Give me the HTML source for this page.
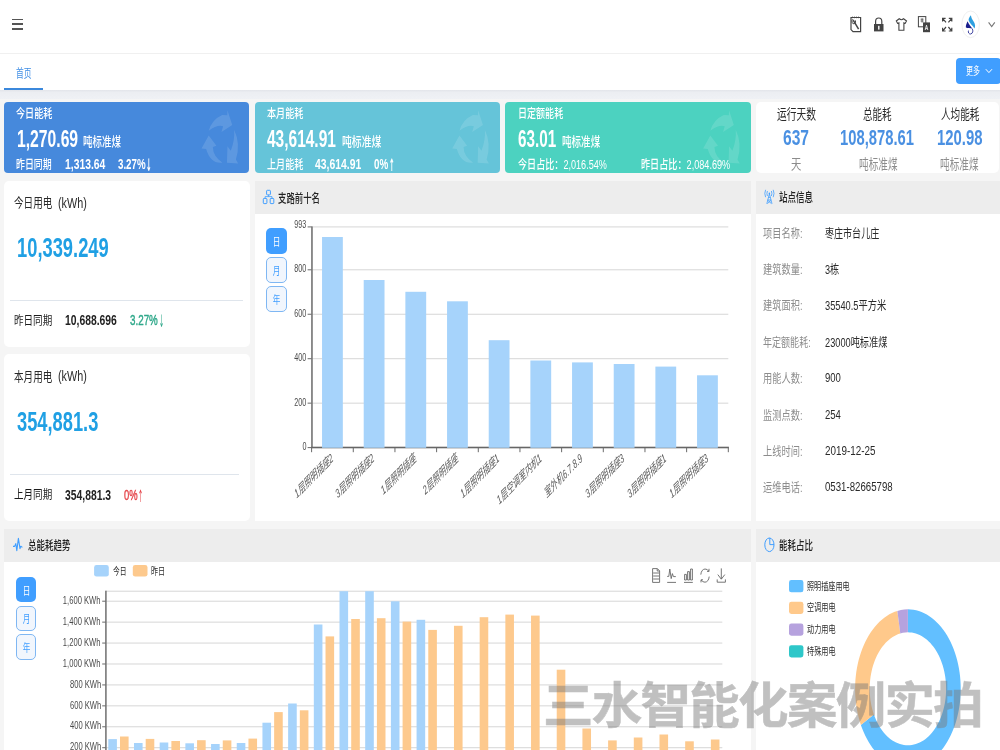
<!DOCTYPE html>
<html lang="zh-CN"><head><meta charset="utf-8"><title>首页</title>
<style>
html,body{margin:0;padding:0}
body{width:1000px;height:750px;overflow:hidden;position:relative;background:#f5f5f5;font-family:"Liberation Sans","Noto Sans CJK SC",sans-serif}
.t{position:absolute;white-space:nowrap;display:block}
svg{position:absolute;overflow:visible}
</style></head><body>
<div style="position:absolute;left:0.00px;top:0.00px;width:1000.00px;height:53.00px;background:#fff;border-radius:0;"></div>
<div style="position:absolute;left:0.00px;top:53.00px;width:1000.00px;height:1.00px;background:#f0f0f0;border-radius:0;"></div>
<div style="position:absolute;left:0.00px;top:54.00px;width:1000.00px;height:35.80px;background:#fff;border-radius:0;"></div>
<div style="position:absolute;left:0.00px;top:89.80px;width:1000.00px;height:9.00px;background:#eef0f4;border-radius:0;background:linear-gradient(#e3e5ea 0,#eceef2 2.5px,#eff1f5 100%);"></div>
<div style="position:absolute;left:11.50px;top:18.60px;width:11.50px;height:1.50px;background:#555;border-radius:0;"></div>
<div style="position:absolute;left:11.50px;top:23.30px;width:11.50px;height:1.50px;background:#555;border-radius:0;"></div>
<div style="position:absolute;left:11.50px;top:28.00px;width:11.50px;height:1.50px;background:#555;border-radius:0;"></div>
<div style="position:absolute;left:3.90px;top:87.50px;width:39.50px;height:2.20px;background:#3b88dc;border-radius:0;"></div>
<div style="position:absolute;left:956.20px;top:58.00px;width:44.40px;height:26.00px;background:#409eff;border-radius:4px;"></div>
<svg style="left:985px;top:68px" width="8" height="6" viewBox="0 0 8 6"><path d="M0.8 1.2 L3.9 4.6 L7 1.2" fill="none" stroke="#fff" stroke-width="1"/></svg>
<svg style="left:848px;top:10px" width="152" height="30" viewBox="848 10 152 30" fill="none" stroke="#444" stroke-width="1.2">
<!-- notebook + wrench -->
<path d="M851 17.5 H860.6 V31.6 H853 L851 29.6 Z"/>
<path d="M852.5 16.6v1.6 M854.5 16.6v1.6 M856.5 16.6v1.6 M858.5 16.6v1.6" stroke-width="0.8"/>
<path d="M853.2 20.2 L858.6 29.2" stroke-width="1.5"/>
<path d="M853 19.2 a1.8 2.4 0 1 0 2.4 1.2" stroke-width="1"/>
<!-- lock -->
<path d="M875.6 24 V21.4 a3.1 3.4 0 0 1 6.2 0 V24" stroke-width="1.2"/>
<rect x="874" y="24" width="9.5" height="7.4" fill="#444" stroke="none"/>
<rect x="878.1" y="25.8" width="1.4" height="3.8" fill="#fff" stroke="none"/>
<!-- shirt -->
<path d="M899.2 18.8 L896.3 21 L897.6 23.4 L898.9 22.8 V30.2 H903.9 V22.8 L905.2 23.4 L906.5 21 L903.6 18.8 Q901.4 20.6 899.2 18.8 Z" stroke-width="1.1"/>
<!-- translate -->
<rect x="918.4" y="16.6" width="7.4" height="10.2" stroke-width="1"/>
<path d="M920.6 19.2h3 M920.6 21h3 M922.1 18.4v4.2" stroke-width="0.8"/>
<rect x="923" y="22.4" width="7" height="9.8" fill="#444" stroke="none"/>
<path d="M925.2 30 L926.5 25.2 L927.8 30 M925.7 28.4h1.7" stroke="#fff" stroke-width="0.8"/>
<!-- fullscreen -->
<path d="M942.6 21.6 V18.4 H945.6 M942.8 18.6 L946 22.4" stroke-width="1.2"/>
<path d="M951.8 21.6 V18.4 H948.8 M951.6 18.6 L948.4 22.4" stroke-width="1.2"/>
<path d="M942.6 27.8 V31 H945.6 M942.8 30.8 L946 27" stroke-width="1.2"/>
<path d="M951.8 27.8 V31 H948.8 M951.6 30.8 L948.4 27" stroke-width="1.2"/>
<!-- avatar -->
<ellipse cx="970.65" cy="24.3" rx="8.8" ry="13.3" fill="#fff" stroke="#f0f0f0" stroke-width="1"/>
<path d="M970.9 15.2 C969.5 17 968.2 18.8 968.7 20.6 C969.6 23.6 972.8 25.4 974.4 28.6 C975.6 26.4 975.2 23.8 973.6 21.4 C972.4 19.6 971.2 17.8 970.9 15.2 Z" fill="#2e9fe0" stroke="none"/>
<path d="M967.5 21.2 C966.6 23.4 965.6 25.6 965.9 27.6 C967.6 28.8 970 28.2 972.3 28.6 C971 26.2 968.6 24.2 967.5 21.2 Z" fill="#1a1f8c" stroke="none"/>
<path d="M972.2 28.6 C973.4 30.4 972.9 33.6 970.7 34 C968.9 34.2 967.9 32.4 968.5 30.6" stroke="#2a2f95" stroke-width="0.9"/>
<!-- chevron -->
<path d="M988.6 22.3 L991.7 26.5 L994.8 22.3" stroke="#777" stroke-width="1.1"/>
</svg>
<div style="position:absolute;left:4.00px;top:102.00px;width:244.80px;height:71.40px;background:#4689dc;border-radius:4px;"></div>
<div style="position:absolute;left:254.70px;top:102.00px;width:244.90px;height:71.40px;background:#65c4d9;border-radius:4px;"></div>
<div style="position:absolute;left:505.40px;top:102.00px;width:245.60px;height:71.40px;background:#4cd2c0;border-radius:4px;"></div>
<svg style="left:0;top:0" width="1000" height="200" viewBox="0 0 1000 200"><path d="M208.72 130.80 Q211.60 119.76 222.16 114.96 L227.25 115.25 L227.44 110.16 L232.24 125.04 L221.49 131.95 L223.12 126.19 Q217.36 124.27 208.72 130.80Z M234.16 129.84 Q240.88 144.24 235.89 159.41 L238.19 163.44 L226.96 162.67 L227.44 146.16 L230.80 150.77 Q234.93 140.40 234.16 129.84Z M208.72 135.60 L216.40 145.68 L212.85 147.12 Q213.04 156.72 222.45 162.67 Q210.64 164.40 206.13 149.04 L201.52 148.56Z" fill="#fff" fill-opacity="0.13"/><path d="M459.42 130.80 Q462.30 119.76 472.86 114.96 L477.95 115.25 L478.14 110.16 L482.94 125.04 L472.19 131.95 L473.82 126.19 Q468.06 124.27 459.42 130.80Z M484.86 129.84 Q491.58 144.24 486.59 159.41 L488.89 163.44 L477.66 162.67 L478.14 146.16 L481.50 150.77 Q485.63 140.40 484.86 129.84Z M459.42 135.60 L467.10 145.68 L463.55 147.12 Q463.74 156.72 473.15 162.67 Q461.34 164.40 456.83 149.04 L452.22 148.56Z" fill="#fff" fill-opacity="0.13"/><path d="M710.32 130.80 Q713.20 119.76 723.76 114.96 L728.85 115.25 L729.04 110.16 L733.84 125.04 L723.09 131.95 L724.72 126.19 Q718.96 124.27 710.32 130.80Z M735.76 129.84 Q742.48 144.24 737.49 159.41 L739.79 163.44 L728.56 162.67 L729.04 146.16 L732.40 150.77 Q736.53 140.40 735.76 129.84Z M710.32 135.60 L718.00 145.68 L714.45 147.12 Q714.64 156.72 724.05 162.67 Q712.24 164.40 707.73 149.04 L703.12 148.56Z" fill="#fff" fill-opacity="0.13"/></svg>
<div style="position:absolute;left:756.00px;top:102.00px;width:242.50px;height:71.40px;background:#fff;border-radius:5px;"></div>
<div style="position:absolute;left:4.00px;top:180.70px;width:245.50px;height:165.90px;background:#fff;border-radius:5px;"></div>
<div style="position:absolute;left:4.00px;top:354.00px;width:245.50px;height:166.50px;background:#fff;border-radius:5px;"></div>
<div style="position:absolute;left:10.40px;top:299.60px;width:232.60px;height:1.00px;background:#dfe5ec;border-radius:0;"></div>
<div style="position:absolute;left:10.40px;top:473.80px;width:228.30px;height:1.00px;background:#dfe5ec;border-radius:0;"></div>
<div style="position:absolute;left:254.70px;top:180.70px;width:496.30px;height:340.30px;background:#fff;border-radius:0;"></div>
<div style="position:absolute;left:254.70px;top:180.70px;width:496.30px;height:33.00px;background:#ededed;border-radius:0;"></div>
<div style="position:absolute;left:756.00px;top:180.70px;width:250.00px;height:340.30px;background:#fff;border-radius:0;"></div>
<div style="position:absolute;left:756.00px;top:180.70px;width:250.00px;height:33.00px;background:#ededed;border-radius:0;"></div>
<div style="position:absolute;left:3.70px;top:528.60px;width:747.00px;height:231.40px;background:#fff;border-radius:0;"></div>
<div style="position:absolute;left:3.70px;top:528.60px;width:747.00px;height:33.00px;background:#ededed;border-radius:0;"></div>
<div style="position:absolute;left:756.00px;top:528.60px;width:250.00px;height:231.40px;background:#fff;border-radius:0;"></div>
<div style="position:absolute;left:756.00px;top:528.60px;width:250.00px;height:33.00px;background:#ededed;border-radius:0;"></div>
<svg style="left:0;top:0" width="1000" height="750" viewBox="0 0 1000 750" fill="none" stroke="#409eff" stroke-width="1">
<!-- org -->
<rect x="266.6" y="190.3" width="3.8" height="4.6" rx="0.8"/>
<rect x="263.3" y="198.4" width="3.6" height="5.2" rx="0.8"/>
<rect x="270.2" y="198.4" width="3.6" height="5.2" rx="0.8"/>
<path d="M268.5 194.9 V196.6 M265.1 198.4 V196.6 H272 V198.4" stroke-width="0.8"/>
<!-- tower -->
<path d="M769.4 193.8 L766.8 203.8 M769.4 193.8 L772 203.8 M767.8 200 H771 M768.4 197.4 H770.4 M767.6 200.2 L771.4 203.6 M771.2 200.2 L767.4 203.6" stroke-width="0.8"/>
<circle cx="769.4" cy="193.4" r="0.8" fill="#409eff" stroke="none"/>
<path d="M767.4 191 Q766.4 193.4 767.4 196 M771.4 191 Q772.4 193.4 771.4 196 M765.6 189.8 Q764 193.4 765.6 197.2 M773.2 189.8 Q774.8 193.4 773.2 197.2" stroke-width="0.8"/>
<!-- pulse -->
<path d="M13 546.4 H14.6 L15.8 543.6 L16.8 550.6 L18.4 538.4 L20 548.6 L20.8 546.2 L22.4 547.4" stroke-width="1.1" stroke-linejoin="round"/>
<!-- pie -->
<ellipse cx="769.4" cy="544.8" rx="4.6" ry="6.8"/>
<path d="M769.8 538 V544.6 H774" />
</svg>
<div style="position:absolute;left:266.45px;top:228.40px;width:20.40px;height:25.60px;background:#409eff;border-radius:5px;"></div>
<div style="position:absolute;left:266.45px;top:257.40px;width:20.40px;height:25.60px;background:#f1f6fd;border-radius:5px;box-sizing:border-box;border:1.3px solid #7fb7f3;"></div>
<div style="position:absolute;left:266.45px;top:286.40px;width:20.40px;height:25.60px;background:#f1f6fd;border-radius:5px;box-sizing:border-box;border:1.3px solid #7fb7f3;"></div>
<div style="position:absolute;left:15.75px;top:576.70px;width:20.60px;height:25.20px;background:#409eff;border-radius:5px;"></div>
<div style="position:absolute;left:15.75px;top:605.60px;width:20.60px;height:25.20px;background:#f1f6fd;border-radius:5px;box-sizing:border-box;border:1.3px solid #7fb7f3;"></div>
<div style="position:absolute;left:15.75px;top:634.40px;width:20.60px;height:25.20px;background:#f1f6fd;border-radius:5px;box-sizing:border-box;border:1.3px solid #7fb7f3;"></div>
<svg style="left:0;top:0" width="1000" height="750" viewBox="0 0 1000 750"><rect x="311.6" y="226.41" width="416.70" height="1" fill="#d6d6d6"/><rect x="311.6" y="269.30" width="416.70" height="1" fill="#d6d6d6"/><rect x="311.6" y="313.75" width="416.70" height="1" fill="#d6d6d6"/><rect x="311.6" y="358.20" width="416.70" height="1" fill="#d6d6d6"/><rect x="311.6" y="402.65" width="416.70" height="1" fill="#d6d6d6"/><rect x="311.1" y="226.41" width="1.7" height="221.69" fill="#7c7c7c"/><rect x="311.0" y="446.70" width="417.90" height="1.6" fill="#666"/><rect x="307.6" y="226.41" width="4" height="1" fill="#6a6a6a"/><rect x="307.6" y="269.30" width="4" height="1" fill="#6a6a6a"/><rect x="307.6" y="313.75" width="4" height="1" fill="#6a6a6a"/><rect x="307.6" y="358.20" width="4" height="1" fill="#6a6a6a"/><rect x="307.6" y="402.65" width="4" height="1" fill="#6a6a6a"/><rect x="307.6" y="447.10" width="4" height="1" fill="#6a6a6a"/><rect x="311.10" y="447.60" width="1" height="4.6" fill="#6a6a6a"/><rect x="352.77" y="447.60" width="1" height="4.6" fill="#6a6a6a"/><rect x="394.44" y="447.60" width="1" height="4.6" fill="#6a6a6a"/><rect x="436.11" y="447.60" width="1" height="4.6" fill="#6a6a6a"/><rect x="477.78" y="447.60" width="1" height="4.6" fill="#6a6a6a"/><rect x="519.45" y="447.60" width="1" height="4.6" fill="#6a6a6a"/><rect x="561.12" y="447.60" width="1" height="4.6" fill="#6a6a6a"/><rect x="602.79" y="447.60" width="1" height="4.6" fill="#6a6a6a"/><rect x="644.46" y="447.60" width="1" height="4.6" fill="#6a6a6a"/><rect x="686.13" y="447.60" width="1" height="4.6" fill="#6a6a6a"/><rect x="727.80" y="447.60" width="1" height="4.6" fill="#6a6a6a"/><rect x="322.04" y="237.00" width="20.8" height="210.80" fill="#a6d3fb"/><rect x="363.71" y="280.00" width="20.8" height="167.80" fill="#a6d3fb"/><rect x="405.38" y="291.80" width="20.8" height="156.00" fill="#a6d3fb"/><rect x="447.05" y="301.30" width="20.8" height="146.50" fill="#a6d3fb"/><rect x="488.72" y="340.20" width="20.8" height="107.60" fill="#a6d3fb"/><rect x="530.38" y="360.50" width="20.8" height="87.30" fill="#a6d3fb"/><rect x="572.05" y="362.40" width="20.8" height="85.40" fill="#a6d3fb"/><rect x="613.73" y="364.00" width="20.8" height="83.80" fill="#a6d3fb"/><rect x="655.39" y="366.60" width="20.8" height="81.20" fill="#a6d3fb"/><rect x="697.06" y="375.30" width="20.8" height="72.50" fill="#a6d3fb"/></svg>
<svg style="left:0;top:0" width="1000" height="750" viewBox="0 0 1000 750"><rect x="105.8" y="590.7" width="616.50" height="1" fill="#d6d6d6"/><rect x="105.8" y="747.21" width="616.50" height="1" fill="#d6d6d6"/><rect x="105.8" y="726.28" width="616.50" height="1" fill="#d6d6d6"/><rect x="105.8" y="705.35" width="616.50" height="1" fill="#d6d6d6"/><rect x="105.8" y="684.42" width="616.50" height="1" fill="#d6d6d6"/><rect x="105.8" y="663.49" width="616.50" height="1" fill="#d6d6d6"/><rect x="105.8" y="642.56" width="616.50" height="1" fill="#d6d6d6"/><rect x="105.8" y="621.63" width="616.50" height="1" fill="#d6d6d6"/><rect x="105.8" y="600.70" width="616.50" height="1" fill="#d6d6d6"/><rect x="108.30" y="739.10" width="8.6" height="20.90" fill="#a6d3fb"/><rect x="133.99" y="743.00" width="8.6" height="17.00" fill="#a6d3fb"/><rect x="159.68" y="742.50" width="8.6" height="17.50" fill="#a6d3fb"/><rect x="185.37" y="743.30" width="8.6" height="16.70" fill="#a6d3fb"/><rect x="211.06" y="744.00" width="8.6" height="16.00" fill="#a6d3fb"/><rect x="236.75" y="743.00" width="8.6" height="17.00" fill="#a6d3fb"/><rect x="262.44" y="722.70" width="8.6" height="37.30" fill="#a6d3fb"/><rect x="288.13" y="703.50" width="8.6" height="56.50" fill="#a6d3fb"/><rect x="313.82" y="624.50" width="8.6" height="135.50" fill="#a6d3fb"/><rect x="339.51" y="591.20" width="8.6" height="168.80" fill="#a6d3fb"/><rect x="365.20" y="591.20" width="8.6" height="168.80" fill="#a6d3fb"/><rect x="390.89" y="601.30" width="8.6" height="158.70" fill="#a6d3fb"/><rect x="416.58" y="619.80" width="8.6" height="140.20" fill="#a6d3fb"/><rect x="120.00" y="736.50" width="8.6" height="23.50" fill="#fdc98d"/><rect x="145.69" y="738.90" width="8.6" height="21.10" fill="#fdc98d"/><rect x="171.38" y="741.00" width="8.6" height="19.00" fill="#fdc98d"/><rect x="197.07" y="740.20" width="8.6" height="19.80" fill="#fdc98d"/><rect x="222.76" y="740.40" width="8.6" height="19.60" fill="#fdc98d"/><rect x="248.45" y="738.60" width="8.6" height="21.40" fill="#fdc98d"/><rect x="274.14" y="712.10" width="8.6" height="47.90" fill="#fdc98d"/><rect x="299.83" y="710.30" width="8.6" height="49.70" fill="#fdc98d"/><rect x="325.52" y="636.40" width="8.6" height="123.60" fill="#fdc98d"/><rect x="351.21" y="619.00" width="8.6" height="141.00" fill="#fdc98d"/><rect x="376.90" y="618.20" width="8.6" height="141.80" fill="#fdc98d"/><rect x="402.59" y="621.60" width="8.6" height="138.40" fill="#fdc98d"/><rect x="428.28" y="629.90" width="8.6" height="130.10" fill="#fdc98d"/><rect x="453.97" y="625.80" width="8.6" height="134.20" fill="#fdc98d"/><rect x="479.66" y="617.20" width="8.6" height="142.80" fill="#fdc98d"/><rect x="505.35" y="614.60" width="8.6" height="145.40" fill="#fdc98d"/><rect x="531.04" y="615.60" width="8.6" height="144.40" fill="#fdc98d"/><rect x="556.73" y="669.70" width="8.6" height="90.30" fill="#fdc98d"/><rect x="582.42" y="728.50" width="8.6" height="31.50" fill="#fdc98d"/><rect x="608.11" y="740.40" width="8.6" height="19.60" fill="#fdc98d"/><rect x="633.80" y="737.50" width="8.6" height="22.50" fill="#fdc98d"/><rect x="659.49" y="734.50" width="8.6" height="25.50" fill="#fdc98d"/><rect x="685.18" y="741.30" width="8.6" height="18.70" fill="#fdc98d"/><rect x="710.87" y="739.50" width="8.6" height="20.50" fill="#fdc98d"/><rect x="105.1" y="590.7" width="1.6" height="170" fill="#787878"/><rect x="102.2" y="747.21" width="3.6" height="1" fill="#6a6a6a"/><rect x="102.2" y="726.28" width="3.6" height="1" fill="#6a6a6a"/><rect x="102.2" y="705.35" width="3.6" height="1" fill="#6a6a6a"/><rect x="102.2" y="684.42" width="3.6" height="1" fill="#6a6a6a"/><rect x="102.2" y="663.49" width="3.6" height="1" fill="#6a6a6a"/><rect x="102.2" y="642.56" width="3.6" height="1" fill="#6a6a6a"/><rect x="102.2" y="621.63" width="3.6" height="1" fill="#6a6a6a"/><rect x="102.2" y="600.70" width="3.6" height="1" fill="#6a6a6a"/><rect x="94.1" y="565" width="14.7" height="11.6" rx="2.4" fill="#a6d3fb"/><rect x="132.8" y="565" width="14.7" height="11.6" rx="2.4" fill="#fdc98d"/><g fill="none" stroke="#666" stroke-width="0.9">
<path d="M652.6 568.6 H657.4 L659.6 570.8 V582.4 H652.6 Z M653.2 573 H659 M653.2 576 H659 M653.2 579 H659 M657.2 568.8 V571 H659.4"/>
<path d="M667.2 576.4 H668.8 L669.8 569 L671.2 578.6 L672.4 573.6 L673.4 576.6 H675.8 M667.2 582.4 H676"/>
<path d="M684.6 580 V574.4 H686.4 V580 Z M687.6 580 V571.6 H689.4 V580 Z M690.6 580 V569 H692.4 V580 Z M684 582.4 H692.8"/>
<path d="M700.8 574.6 Q701.4 569.4 705 569 Q707.6 569 708.8 571.2 M709 568.8 V571.4 H707 M709.2 576.6 Q708.6 581.8 705 582.2 Q702.4 582.2 701.2 580 M701 582.4 V579.8 H703"/>
<path d="M721.3 568.4 V579 M717.8 574.6 L721.3 579.2 L724.8 574.6 M717.2 579.4 V582.2 H725.4 V579.4"/>
</g></svg>
<svg style="left:0;top:0" width="1000" height="750" viewBox="0 0 1000 750"><path d="M907.90 609.30 L910.66 609.41 L913.42 609.74 L916.16 610.28 L918.88 611.04 L921.57 612.01 L924.22 613.19 L926.82 614.58 L929.38 616.17 L931.87 617.96 L934.30 619.95 L936.66 622.13 L938.94 624.48 L941.13 627.02 L943.23 629.72 L945.24 632.59 L947.14 635.60 L948.93 638.77 L950.62 642.07 L952.18 645.50 L953.63 649.05 L954.95 652.71 L956.14 656.46 L957.19 660.31 L958.12 664.23 L958.90 668.22 L959.55 672.27 L960.05 676.36 L960.41 680.49 L960.63 684.64 L960.70 688.80 L960.63 692.96 L960.41 697.11 L960.05 701.24 L959.55 705.33 L958.90 709.38 L958.12 713.37 L957.19 717.29 L956.14 721.14 L954.95 724.89 L953.63 728.55 L952.18 732.10 L950.62 735.53 L948.93 738.83 L947.14 742.00 L945.24 745.01 L943.23 747.88 L941.13 750.58 L938.94 753.12 L936.66 755.47 L934.30 757.65 L931.87 759.64 L929.38 761.43 L926.82 763.02 L924.22 764.41 L921.57 765.59 L918.88 766.56 L916.16 767.32 L913.42 767.86 L910.66 768.19 L907.90 768.30 L905.14 768.19 L902.38 767.86 L899.64 767.32 L896.92 766.56 L894.23 765.59 L891.58 764.41 L888.98 763.02 L886.42 761.43 L883.93 759.64 L881.50 757.65 L879.14 755.47 L876.86 753.12 L874.67 750.58 L872.57 747.88 L870.56 745.01 L868.66 742.00 L866.87 738.83 L865.18 735.53 L863.62 732.10 L862.17 728.55 L860.85 724.89 L873.86 714.45 L874.82 717.05 L875.86 719.57 L877.00 722.01 L878.21 724.36 L879.51 726.61 L880.89 728.75 L882.34 730.79 L883.86 732.71 L885.45 734.51 L887.09 736.18 L888.80 737.73 L890.56 739.14 L892.36 740.42 L894.21 741.55 L896.10 742.53 L898.01 743.37 L899.96 744.07 L901.92 744.60 L903.91 744.99 L905.90 745.22 L907.90 745.30 L909.90 745.22 L911.89 744.99 L913.88 744.60 L915.84 744.07 L917.79 743.37 L919.70 742.53 L921.59 741.55 L923.44 740.42 L925.24 739.14 L927.00 737.73 L928.71 736.18 L930.35 734.51 L931.94 732.71 L933.46 730.79 L934.91 728.75 L936.29 726.61 L937.59 724.36 L938.80 722.01 L939.94 719.57 L940.98 717.05 L941.94 714.45 L942.80 711.78 L943.56 709.05 L944.23 706.26 L944.80 703.42 L945.27 700.55 L945.63 697.64 L945.89 694.71 L946.05 691.76 L946.10 688.80 L946.05 685.84 L945.89 682.89 L945.63 679.96 L945.27 677.05 L944.80 674.18 L944.23 671.34 L943.56 668.55 L942.80 665.82 L941.94 663.15 L940.98 660.55 L939.94 658.03 L938.80 655.59 L937.59 653.24 L936.29 650.99 L934.91 648.85 L933.46 646.81 L931.94 644.89 L930.35 643.09 L928.71 641.42 L927.00 639.87 L925.24 638.46 L923.44 637.18 L921.59 636.05 L919.70 635.07 L917.79 634.23 L915.84 633.53 L913.88 633.00 L911.89 632.61 L909.90 632.38 L907.90 632.30Z" fill="#62bfff"/><path d="M860.85 724.89 L859.66 721.12 L858.60 717.25 L857.67 713.31 L856.89 709.30 L856.24 705.23 L855.74 701.12 L855.38 696.97 L855.17 692.80 L855.10 688.62 L855.18 684.44 L855.40 680.27 L855.78 676.13 L856.29 672.02 L856.95 667.96 L857.75 663.95 L858.68 660.01 L859.76 656.16 L860.96 652.39 L862.30 648.72 L863.76 645.17 L865.35 641.73 L867.05 638.43 L868.87 635.27 L870.79 632.25 L872.82 629.39 L874.94 626.69 L877.15 624.17 L879.45 621.83 L881.83 619.67 L884.28 617.70 L886.80 615.93 L889.37 614.36 L892.00 612.99 L894.67 611.84 L897.37 610.90 L900.28 633.43 L898.33 634.10 L896.39 634.92 L894.50 635.89 L892.63 637.01 L890.81 638.27 L889.04 639.67 L887.32 641.20 L885.66 642.87 L884.05 644.66 L882.52 646.58 L881.05 648.61 L879.66 650.75 L878.35 653.00 L877.11 655.35 L875.97 657.79 L874.91 660.32 L873.94 662.92 L873.07 665.60 L872.29 668.34 L871.61 671.14 L871.04 673.99 L870.56 676.87 L870.19 679.79 L869.92 682.74 L869.76 685.70 L869.70 688.67 L869.75 691.64 L869.90 694.61 L870.16 697.56 L870.52 700.48 L870.99 703.37 L871.56 706.22 L872.23 709.02 L873.00 711.77 L873.86 714.45Z" fill="#ffc98b"/><path d="M897.37 610.90 L900.86 610.01 L904.37 609.48 L907.90 609.30 L907.90 632.30 L905.35 632.43 L902.80 632.81 L900.28 633.43Z" fill="#b6a2de"/><rect x="789" y="580.10" width="14.4" height="12.2" rx="2.4" fill="#62bfff"/><rect x="789" y="601.80" width="14.4" height="12.2" rx="2.4" fill="#ffc98b"/><rect x="789" y="623.50" width="14.4" height="12.2" rx="2.4" fill="#b6a2de"/><rect x="789" y="645.20" width="14.4" height="12.2" rx="2.4" fill="#2ec7c9"/></svg>
<div style="position:absolute;left:0;top:0;width:1000px;height:750px;will-change:transform">
<span class="t" style="left:16.30px;top:67.52px;font-size:12px;line-height:12px;height:12px;color:#3f8ee6;font-weight:400;transform-origin:0 50%;transform:scaleX(0.6454);">首页</span>
<span class="t" style="left:965.90px;top:66.03px;font-size:11px;line-height:11px;height:11px;color:#fff;font-weight:400;transform-origin:0 50%;transform:scaleX(0.6364);">更多</span>
<span class="t" style="left:16.30px;top:108.21px;font-size:12.5px;line-height:12.5px;height:12.5px;color:#fff;font-weight:500;transform-origin:0 50%;transform:scaleX(0.7278);">今日能耗</span>
<span class="t" style="left:16.90px;top:126.90px;font-size:24px;line-height:24px;height:24px;color:#fff;font-weight:700;transform-origin:0 50%;transform:scaleX(0.6540);">1,270.69</span>
<span class="t" style="left:83.00px;top:134.70px;font-size:13px;line-height:13px;height:13px;color:#fff;font-weight:500;transform-origin:0 50%;transform:scaleX(0.7305);">吨标准煤</span>
<span class="t" style="left:16.30px;top:159.01px;font-size:12.5px;line-height:12.5px;height:12.5px;color:#fff;font-weight:500;transform-origin:0 50%;transform:scaleX(0.7138);">昨日同期</span>
<span class="t" style="left:65.00px;top:156.25px;font-size:15.5px;line-height:15.5px;height:15.5px;color:#fff;font-weight:700;transform-origin:0 50%;transform:scaleX(0.6678);">1,313.64</span>
<span class="t" style="left:118.30px;top:156.25px;font-size:15.5px;line-height:15.5px;height:15.5px;color:#fff;font-weight:700;transform-origin:0 50%;transform:scaleX(0.6279);">3.27%</span>
<span class="t" style="font-family:'DejaVu Sans',sans-serif;left:146.40px;top:156.80px;font-size:17px;line-height:17px;height:17px;color:#fff;font-weight:700;transform-origin:0 50%;transform:scaleX(0.3930);">↓</span>
<span class="t" style="left:266.90px;top:108.21px;font-size:12.5px;line-height:12.5px;height:12.5px;color:#fff;font-weight:500;transform-origin:0 50%;transform:scaleX(0.7278);">本月能耗</span>
<span class="t" style="left:266.90px;top:126.90px;font-size:24px;line-height:24px;height:24px;color:#fff;font-weight:700;transform-origin:0 50%;transform:scaleX(0.6452);">43,614.91</span>
<span class="t" style="left:341.50px;top:134.70px;font-size:13px;line-height:13px;height:13px;color:#fff;font-weight:500;transform-origin:0 50%;transform:scaleX(0.7555);">吨标准煤</span>
<span class="t" style="left:266.90px;top:159.01px;font-size:12.5px;line-height:12.5px;height:12.5px;color:#fff;font-weight:500;transform-origin:0 50%;transform:scaleX(0.7278);">上月能耗</span>
<span class="t" style="left:315.00px;top:156.25px;font-size:15.5px;line-height:15.5px;height:15.5px;color:#fff;font-weight:700;transform-origin:0 50%;transform:scaleX(0.6713);">43,614.91</span>
<span class="t" style="left:374.30px;top:156.25px;font-size:15.5px;line-height:15.5px;height:15.5px;color:#fff;font-weight:700;transform-origin:0 50%;transform:scaleX(0.6338);">0%</span>
<span class="t" style="font-family:'DejaVu Sans',sans-serif;left:388.80px;top:156.80px;font-size:17px;line-height:17px;height:17px;color:#fff;font-weight:700;transform-origin:0 50%;transform:scaleX(0.3930);">↑</span>
<span class="t" style="left:517.90px;top:108.21px;font-size:12.5px;line-height:12.5px;height:12.5px;color:#fff;font-weight:500;transform-origin:0 50%;transform:scaleX(0.7230);">日定额能耗</span>
<span class="t" style="left:517.90px;top:126.90px;font-size:24px;line-height:24px;height:24px;color:#fff;font-weight:700;transform-origin:0 50%;transform:scaleX(0.6360);">63.01</span>
<span class="t" style="left:562.10px;top:134.70px;font-size:13px;line-height:13px;height:13px;color:#fff;font-weight:500;transform-origin:0 50%;transform:scaleX(0.7344);">吨标准煤</span>
<span class="t" style="left:517.90px;top:159.01px;font-size:12.5px;line-height:12.5px;height:12.5px;color:#fff;font-weight:500;transform-origin:0 50%;transform:scaleX(0.7270);">今日占比：2,016.54%</span>
<span class="t" style="left:640.60px;top:159.01px;font-size:12.5px;line-height:12.5px;height:12.5px;color:#fff;font-weight:500;transform-origin:0 50%;transform:scaleX(0.7295);">昨日占比：2,084.69%</span>
<span class="t" style="left:777.00px;top:107.77px;font-size:13.8px;line-height:13.8px;height:13.8px;color:#2a2a2a;font-weight:400;transform-origin:0 50%;transform:scaleX(0.7067);">运行天数</span>
<span class="t" style="left:863.40px;top:107.77px;font-size:13.8px;line-height:13.8px;height:13.8px;color:#2a2a2a;font-weight:400;transform-origin:0 50%;transform:scaleX(0.6910);">总能耗</span>
<span class="t" style="left:940.60px;top:107.77px;font-size:13.8px;line-height:13.8px;height:13.8px;color:#2a2a2a;font-weight:400;transform-origin:0 50%;transform:scaleX(0.6976);">人均能耗</span>
<span class="t" style="left:782.90px;top:126.60px;font-size:22px;line-height:22px;height:22px;color:#4a90e2;font-weight:700;transform-origin:0 50%;transform:scaleX(0.7081);">637</span>
<span class="t" style="left:840.00px;top:126.60px;font-size:22px;line-height:22px;height:22px;color:#4a90e2;font-weight:700;transform-origin:0 50%;transform:scaleX(0.6721);">108,878.61</span>
<span class="t" style="left:936.80px;top:126.60px;font-size:22px;line-height:22px;height:22px;color:#4a90e2;font-weight:700;transform-origin:0 50%;transform:scaleX(0.6761);">120.98</span>
<span class="t" style="left:790.70px;top:157.90px;font-size:13.5px;line-height:13.5px;height:13.5px;color:#8c8c8c;font-weight:400;transform-origin:0 50%;transform:scaleX(0.7630);">天</span>
<span class="t" style="left:858.80px;top:157.90px;font-size:13.5px;line-height:13.5px;height:13.5px;color:#8c8c8c;font-weight:400;transform-origin:0 50%;transform:scaleX(0.7130);">吨标准煤</span>
<span class="t" style="left:940.20px;top:157.90px;font-size:13.5px;line-height:13.5px;height:13.5px;color:#8c8c8c;font-weight:400;transform-origin:0 50%;transform:scaleX(0.7130);">吨标准煤</span>
<span class="t" style="left:13.90px;top:196.20px;font-size:13px;line-height:13px;height:13px;color:#2a2a2a;font-weight:400;transform-origin:0 50%;transform:scaleX(0.7363);">今日用电</span>
<span class="t" style="left:58.30px;top:195.75px;font-size:14.5px;line-height:14.5px;height:14.5px;color:#2a2a2a;font-weight:400;transform-origin:0 50%;transform:scaleX(0.7447);">(kWh)</span>
<span class="t" style="left:17.00px;top:235.00px;font-size:27px;line-height:27px;height:27px;color:#20a0e4;font-weight:700;transform-origin:0 50%;transform:scaleX(0.6786);">10,339.249</span>
<span class="t" style="left:14.00px;top:314.90px;font-size:12.3px;line-height:12.3px;height:12.3px;color:#1c1c1c;font-weight:400;transform-origin:0 50%;transform:scaleX(0.7764);">昨日同期</span>
<span class="t" style="left:65.20px;top:312.35px;font-size:15.5px;line-height:15.5px;height:15.5px;color:#222;font-weight:700;transform-origin:0 50%;transform:scaleX(0.6677);">10,688.696</span>
<span class="t" style="left:130.00px;top:312.35px;font-size:15.5px;line-height:15.5px;height:15.5px;color:#2fa88a;font-weight:400;transform-origin:0 50%;transform:scaleX(0.6325);-webkit-text-stroke:0.45px #2fa88a;">3.27%</span>
<span class="t" style="font-family:'DejaVu Sans',sans-serif;left:158.60px;top:313.00px;font-size:17px;line-height:17px;height:17px;color:#2fa88a;font-weight:400;transform-origin:0 50%;transform:scaleX(0.3509);">↓</span>
<span class="t" style="left:13.90px;top:369.61px;font-size:13px;line-height:13px;height:13px;color:#2a2a2a;font-weight:400;transform-origin:0 50%;transform:scaleX(0.7363);">本月用电</span>
<span class="t" style="left:58.30px;top:369.25px;font-size:14.5px;line-height:14.5px;height:14.5px;color:#2a2a2a;font-weight:400;transform-origin:0 50%;transform:scaleX(0.7447);">(kWh)</span>
<span class="t" style="left:17.00px;top:408.80px;font-size:27px;line-height:27px;height:27px;color:#20a0e4;font-weight:700;transform-origin:0 50%;transform:scaleX(0.6768);">354,881.3</span>
<span class="t" style="left:14.00px;top:489.40px;font-size:12.3px;line-height:12.3px;height:12.3px;color:#1c1c1c;font-weight:400;transform-origin:0 50%;transform:scaleX(0.7764);">上月同期</span>
<span class="t" style="left:65.20px;top:486.85px;font-size:15.5px;line-height:15.5px;height:15.5px;color:#222;font-weight:700;transform-origin:0 50%;transform:scaleX(0.6684);">354,881.3</span>
<span class="t" style="left:124.00px;top:486.85px;font-size:15.5px;line-height:15.5px;height:15.5px;color:#e5484d;font-weight:400;transform-origin:0 50%;transform:scaleX(0.6070);-webkit-text-stroke:0.45px #e5484d;">0%</span>
<span class="t" style="font-family:'DejaVu Sans',sans-serif;left:138.20px;top:487.50px;font-size:17px;line-height:17px;height:17px;color:#e5484d;font-weight:400;transform-origin:0 50%;transform:scaleX(0.3509);">↑</span>
<span class="t" style="left:277.80px;top:192.61px;font-size:12.5px;line-height:12.5px;height:12.5px;color:#222;font-weight:500;transform-origin:0 50%;transform:scaleX(0.6718);">支路前十名</span>
<span class="t" style="left:779.20px;top:192.41px;font-size:12.5px;line-height:12.5px;height:12.5px;color:#222;font-weight:500;transform-origin:0 50%;transform:scaleX(0.6798);">站点信息</span>
<span class="t" style="left:27.60px;top:540.41px;font-size:12.5px;line-height:12.5px;height:12.5px;color:#222;font-weight:500;transform-origin:0 50%;transform:scaleX(0.6782);">总能耗趋势</span>
<span class="t" style="left:779.20px;top:540.41px;font-size:12.5px;line-height:12.5px;height:12.5px;color:#222;font-weight:500;transform-origin:0 50%;transform:scaleX(0.6798);">能耗占比</span>
<span class="t" style="left:271.15px;top:237.44px;font-size:11px;line-height:11px;height:11px;color:#fff;font-weight:400;transform-origin:50% 50%;transform:scaleX(0.6909);">日</span>
<span class="t" style="left:271.15px;top:266.44px;font-size:11px;line-height:11px;height:11px;color:#409eff;font-weight:400;transform-origin:50% 50%;transform:scaleX(0.6909);">月</span>
<span class="t" style="left:271.15px;top:295.44px;font-size:11px;line-height:11px;height:11px;color:#409eff;font-weight:400;transform-origin:50% 50%;transform:scaleX(0.6909);">年</span>
<span class="t" style="left:20.55px;top:585.53px;font-size:11px;line-height:11px;height:11px;color:#fff;font-weight:400;transform-origin:50% 50%;transform:scaleX(0.6909);">日</span>
<span class="t" style="left:20.55px;top:614.43px;font-size:11px;line-height:11px;height:11px;color:#409eff;font-weight:400;transform-origin:50% 50%;transform:scaleX(0.6909);">月</span>
<span class="t" style="left:20.55px;top:643.23px;font-size:11px;line-height:11px;height:11px;color:#409eff;font-weight:400;transform-origin:50% 50%;transform:scaleX(0.6909);">年</span>
<span class="t" style="left:287.01px;top:219.16px;font-size:11.5px;line-height:11.5px;height:11.5px;color:#4a4a4a;font-weight:400;transform-origin:100% 50%;transform:scaleX(0.6202);">993</span>
<span class="t" style="left:287.01px;top:263.15px;font-size:11.5px;line-height:11.5px;height:11.5px;color:#4a4a4a;font-weight:400;transform-origin:100% 50%;transform:scaleX(0.6202);">800</span>
<span class="t" style="left:287.01px;top:307.60px;font-size:11.5px;line-height:11.5px;height:11.5px;color:#4a4a4a;font-weight:400;transform-origin:100% 50%;transform:scaleX(0.6202);">600</span>
<span class="t" style="left:287.01px;top:352.05px;font-size:11.5px;line-height:11.5px;height:11.5px;color:#4a4a4a;font-weight:400;transform-origin:100% 50%;transform:scaleX(0.6202);">400</span>
<span class="t" style="left:287.01px;top:396.50px;font-size:11.5px;line-height:11.5px;height:11.5px;color:#4a4a4a;font-weight:400;transform-origin:100% 50%;transform:scaleX(0.6202);">200</span>
<span class="t" style="left:299.99px;top:441.25px;font-size:11.5px;line-height:11.5px;height:11.5px;color:#4a4a4a;font-weight:400;transform-origin:100% 50%;transform:scaleX(0.6244);">0</span>
<span class="t" style="left:255.73px;top:450.61px;font-size:12.5px;line-height:12.5px;height:12.5px;color:#5a5a5a;font-weight:400;font-style:italic;transform-origin:100% 50%;transform:scaleX(0.6800);transform:scaleX(0.68) rotate(-35deg) scaleX(0.87);">1层照明插座2</span>
<span class="t" style="left:297.40px;top:450.61px;font-size:12.5px;line-height:12.5px;height:12.5px;color:#5a5a5a;font-weight:400;font-style:italic;transform-origin:100% 50%;transform:scaleX(0.6800);transform:scaleX(0.68) rotate(-35deg) scaleX(0.87);">3层照明插座2</span>
<span class="t" style="left:346.02px;top:450.61px;font-size:12.5px;line-height:12.5px;height:12.5px;color:#5a5a5a;font-weight:400;font-style:italic;transform-origin:100% 50%;transform:scaleX(0.6800);transform:scaleX(0.68) rotate(-35deg) scaleX(0.87);">1层照明插座</span>
<span class="t" style="left:387.69px;top:450.61px;font-size:12.5px;line-height:12.5px;height:12.5px;color:#5a5a5a;font-weight:400;font-style:italic;transform-origin:100% 50%;transform:scaleX(0.6800);transform:scaleX(0.68) rotate(-35deg) scaleX(0.87);">2层照明插座</span>
<span class="t" style="left:422.41px;top:450.61px;font-size:12.5px;line-height:12.5px;height:12.5px;color:#5a5a5a;font-weight:400;font-style:italic;transform-origin:100% 50%;transform:scaleX(0.6800);transform:scaleX(0.68) rotate(-35deg) scaleX(0.87);">1层照明插座1</span>
<span class="t" style="left:451.58px;top:450.61px;font-size:12.5px;line-height:12.5px;height:12.5px;color:#5a5a5a;font-weight:400;font-style:italic;transform-origin:100% 50%;transform:scaleX(0.6800);transform:scaleX(0.68) rotate(-35deg) scaleX(0.87);">1层空调室内机1</span>
<span class="t" style="left:506.42px;top:450.61px;font-size:12.5px;line-height:12.5px;height:12.5px;color:#5a5a5a;font-weight:400;font-style:italic;transform-origin:100% 50%;transform:scaleX(0.6800);transform:scaleX(0.68) rotate(-35deg) scaleX(0.87);">室外机6.7.8.9</span>
<span class="t" style="left:547.42px;top:450.61px;font-size:12.5px;line-height:12.5px;height:12.5px;color:#5a5a5a;font-weight:400;font-style:italic;transform-origin:100% 50%;transform:scaleX(0.6800);transform:scaleX(0.68) rotate(-35deg) scaleX(0.87);">3层照明插座3</span>
<span class="t" style="left:589.09px;top:450.61px;font-size:12.5px;line-height:12.5px;height:12.5px;color:#5a5a5a;font-weight:400;font-style:italic;transform-origin:100% 50%;transform:scaleX(0.6800);transform:scaleX(0.68) rotate(-35deg) scaleX(0.87);">3层照明插座1</span>
<span class="t" style="left:630.76px;top:450.61px;font-size:12.5px;line-height:12.5px;height:12.5px;color:#5a5a5a;font-weight:400;font-style:italic;transform-origin:100% 50%;transform:scaleX(0.6800);transform:scaleX(0.68) rotate(-35deg) scaleX(0.87);">1层照明插座3</span>
<span class="t" style="left:763.00px;top:227.61px;font-size:12.5px;line-height:12.5px;height:12.5px;color:#8c8c8c;font-weight:400;transform-origin:0 50%;transform:scaleX(0.7385);">项目名称:</span>
<span class="t" style="left:824.50px;top:227.61px;font-size:12.5px;line-height:12.5px;height:12.5px;color:#2a2a2a;font-weight:400;transform-origin:0 50%;transform:scaleX(0.7225);">枣庄市台儿庄</span>
<span class="t" style="left:763.00px;top:264.01px;font-size:12.5px;line-height:12.5px;height:12.5px;color:#8c8c8c;font-weight:400;transform-origin:0 50%;transform:scaleX(0.7385);">建筑数量:</span>
<span class="t" style="left:824.50px;top:264.01px;font-size:12.5px;line-height:12.5px;height:12.5px;color:#2a2a2a;font-weight:400;transform-origin:0 50%;transform:scaleX(0.7300);">3栋</span>
<span class="t" style="left:763.00px;top:300.41px;font-size:12.5px;line-height:12.5px;height:12.5px;color:#8c8c8c;font-weight:400;transform-origin:0 50%;transform:scaleX(0.7385);">建筑面积:</span>
<span class="t" style="left:824.50px;top:300.41px;font-size:12.5px;line-height:12.5px;height:12.5px;color:#2a2a2a;font-weight:400;transform-origin:0 50%;transform:scaleX(0.7401);">35540.5平方米</span>
<span class="t" style="left:763.00px;top:336.81px;font-size:12.5px;line-height:12.5px;height:12.5px;color:#8c8c8c;font-weight:400;transform-origin:0 50%;transform:scaleX(0.7229);">年定额能耗:</span>
<span class="t" style="left:824.50px;top:336.81px;font-size:12.5px;line-height:12.5px;height:12.5px;color:#2a2a2a;font-weight:400;transform-origin:0 50%;transform:scaleX(0.7373);">23000吨标准煤</span>
<span class="t" style="left:763.00px;top:373.21px;font-size:12.5px;line-height:12.5px;height:12.5px;color:#8c8c8c;font-weight:400;transform-origin:0 50%;transform:scaleX(0.7385);">用能人数:</span>
<span class="t" style="left:824.50px;top:372.15px;font-size:12.5px;line-height:12.5px;height:12.5px;color:#2a2a2a;font-weight:400;transform-origin:0 50%;transform:scaleX(0.7622);">900</span>
<span class="t" style="left:763.00px;top:409.61px;font-size:12.5px;line-height:12.5px;height:12.5px;color:#8c8c8c;font-weight:400;transform-origin:0 50%;transform:scaleX(0.7385);">监测点数:</span>
<span class="t" style="left:824.50px;top:408.55px;font-size:12.5px;line-height:12.5px;height:12.5px;color:#2a2a2a;font-weight:400;transform-origin:0 50%;transform:scaleX(0.7622);">254</span>
<span class="t" style="left:763.00px;top:446.01px;font-size:12.5px;line-height:12.5px;height:12.5px;color:#8c8c8c;font-weight:400;transform-origin:0 50%;transform:scaleX(0.7385);">上线时间:</span>
<span class="t" style="left:824.50px;top:444.95px;font-size:12.5px;line-height:12.5px;height:12.5px;color:#2a2a2a;font-weight:400;transform-origin:0 50%;transform:scaleX(0.7881);">2019-12-25</span>
<span class="t" style="left:763.00px;top:482.41px;font-size:12.5px;line-height:12.5px;height:12.5px;color:#8c8c8c;font-weight:400;transform-origin:0 50%;transform:scaleX(0.7385);">运维电话:</span>
<span class="t" style="left:824.50px;top:481.35px;font-size:12.5px;line-height:12.5px;height:12.5px;color:#2a2a2a;font-weight:400;transform-origin:0 50%;transform:scaleX(0.7729);">0531-82665798</span>
<span class="t" style="left:112.50px;top:565.54px;font-size:10.5px;line-height:10.5px;height:10.5px;color:#2a2a2a;font-weight:400;transform-origin:0 50%;transform:scaleX(0.6429);">今日</span>
<span class="t" style="left:150.90px;top:565.54px;font-size:10.5px;line-height:10.5px;height:10.5px;color:#2a2a2a;font-weight:400;transform-origin:0 50%;transform:scaleX(0.6714);">昨日</span>
<span class="t" style="left:55.55px;top:741.41px;font-size:11px;line-height:11px;height:11px;color:#4a4a4a;font-weight:400;transform-origin:100% 50%;transform:scaleX(0.6900);">200 KWh</span>
<span class="t" style="left:55.55px;top:720.48px;font-size:11px;line-height:11px;height:11px;color:#4a4a4a;font-weight:400;transform-origin:100% 50%;transform:scaleX(0.6900);">400 KWh</span>
<span class="t" style="left:55.55px;top:699.55px;font-size:11px;line-height:11px;height:11px;color:#4a4a4a;font-weight:400;transform-origin:100% 50%;transform:scaleX(0.6900);">600 KWh</span>
<span class="t" style="left:55.55px;top:678.62px;font-size:11px;line-height:11px;height:11px;color:#4a4a4a;font-weight:400;transform-origin:100% 50%;transform:scaleX(0.6900);">800 KWh</span>
<span class="t" style="left:46.38px;top:657.69px;font-size:11px;line-height:11px;height:11px;color:#4a4a4a;font-weight:400;transform-origin:100% 50%;transform:scaleX(0.6900);">1,000 KWh</span>
<span class="t" style="left:46.38px;top:636.76px;font-size:11px;line-height:11px;height:11px;color:#4a4a4a;font-weight:400;transform-origin:100% 50%;transform:scaleX(0.6900);">1,200 KWh</span>
<span class="t" style="left:46.38px;top:615.83px;font-size:11px;line-height:11px;height:11px;color:#4a4a4a;font-weight:400;transform-origin:100% 50%;transform:scaleX(0.6900);">1,400 KWh</span>
<span class="t" style="left:46.38px;top:594.90px;font-size:11px;line-height:11px;height:11px;color:#4a4a4a;font-weight:400;transform-origin:100% 50%;transform:scaleX(0.6900);">1,600 KWh</span>
<span class="t" style="left:807.00px;top:580.54px;font-size:10.5px;line-height:10.5px;height:10.5px;color:#2a2a2a;font-weight:400;transform-origin:0 50%;transform:scaleX(0.6762);">照明插座用电</span>
<span class="t" style="left:807.00px;top:602.24px;font-size:10.5px;line-height:10.5px;height:10.5px;color:#2a2a2a;font-weight:400;transform-origin:0 50%;transform:scaleX(0.6786);">空调用电</span>
<span class="t" style="left:807.00px;top:623.94px;font-size:10.5px;line-height:10.5px;height:10.5px;color:#2a2a2a;font-weight:400;transform-origin:0 50%;transform:scaleX(0.6786);">动力用电</span>
<span class="t" style="left:807.00px;top:645.64px;font-size:10.5px;line-height:10.5px;height:10.5px;color:#2a2a2a;font-weight:400;transform-origin:0 50%;transform:scaleX(0.6786);">特殊用电</span>
<div class="t" style="left:542.5px;top:672.5px;font-size:48.5px;line-height:58px;transform-origin:0 50%;transform:scaleX(1.04);font-weight:700;color:#7a7a7a;-webkit-text-stroke:0.5px #7a7a7a;opacity:0.47;letter-spacing:-1.6px;font-family:'Noto Sans CJK SC',sans-serif">三水智能化案例实拍</div>
</div>
</body></html>
